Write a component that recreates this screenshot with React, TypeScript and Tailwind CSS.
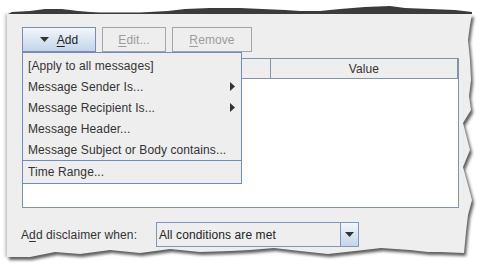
import React from "react";

const panelPath =
  "M7,14 L472,14 L470,25 L468,40 L470,60 L471,80 L469,96 L471,110 L463,123 L470,150 L463,167 L468,185 L472,200 L468,215 L466,232 L464,253 L440,252 L428,252 L410,250 L381,248 L355,251 L328,254 L300,251 L274,248 L250,250 L230,251 L200,252 L170,249 L140,253 L110,250 L80,254 L55,252 L30,257 L7,257 Z";

const topBand =
  "M8,14 L12,12 L30,11 L45,9 L62,9 L78,11 L90,12 L100,12.5 L140,12.5 L168,11 L185,9 L210,8 L240,8 L262,9 L285,10 L300,11 L320,11 L340,9 L365,7 L390,6 L405,8 L430,9 L455,10 L472,12 L472,14 Z";

function TornPaper() {
  return (
    <svg className="absolute inset-0" width="482" height="269" viewBox="0 0 482 269">
      <defs>
        <filter id="blur1" x="-10%" y="-10%" width="120%" height="120%">
          <feGaussianBlur stdDeviation="1.6" />
        </filter>
        <filter id="blur2" x="-10%" y="-10%" width="120%" height="120%">
          <feGaussianBlur stdDeviation="0.6" />
        </filter>
      </defs>
      <path d={panelPath} transform="translate(-2,0)" fill="#c8c8c8" filter="url(#blur1)" />
      <path d={panelPath} transform="translate(2,3)" fill="#5e5e5e" filter="url(#blur1)" />
      <path d={topBand} fill="#3a3a3a" filter="url(#blur2)" />
      <path d={panelPath} fill="#eeeeee" />
    </svg>
  );
}

function MenuItem({ label, sub }: { label: string; sub?: boolean }) {
  return (
    <div className="h-[21px] flex items-center justify-between pl-[5px] pr-[6px] text-[#333]">
      <span>{label}</span>
      {sub && (
        <svg width="5" height="9" viewBox="0 0 5 9">
          <path d="M0,0 L5,4.5 L0,9 Z" fill="#333" />
        </svg>
      )}
    </div>
  );
}

export default function App() {
  return (
    <div className="w-[482px] h-[269px] relative bg-white overflow-hidden font-['Liberation_Sans',Arial,sans-serif] text-[12px] leading-none tracking-[0.1px]">
      <TornPaper />
      <div className="relative flex flex-col pl-[22px] pt-[27px]">
        {/* button row */}
        <div className="relative flex gap-[6px] h-[25px]">
          <div className="w-[74px] h-[25px] border border-[#7b8dac] bg-gradient-to-b from-[#f3f6fb] to-[#c3d5ea] flex items-center justify-center gap-[8px] text-[#222]">
            <svg width="9" height="5" viewBox="0 0 9 5">
              <path d="M0,0 L9,0 L4.5,5 Z" fill="#333" />
            </svg>
            <span>
              <u className="underline-offset-2">A</u>dd
            </span>
          </div>
          <div className="w-[64px] h-[25px] border border-[#a5a5a5] flex items-center justify-center text-[#9c9c9c]">
            <span>
              <u className="underline-offset-2">E</u>dit...
            </span>
          </div>
          <div className="w-[80px] h-[25px] border border-[#a5a5a5] flex items-center justify-center text-[#9c9c9c]">
            <span>
              <u className="underline-offset-2">R</u>emove
            </span>
          </div>

          {/* popup menu */}
          <div className="absolute left-0 top-[25px] w-[220px] z-10 border border-[#6d8cc7] bg-[#eeeeee] pt-[2px] pb-[1px] flex flex-col">
            <MenuItem label="[Apply to all messages]" />
            <MenuItem label="Message Sender Is..." sub />
            <MenuItem label="Message Recipient Is..." sub />
            <MenuItem label="Message Header..." />
            <MenuItem label="Message Subject or Body contains..." />
            <div className="h-px bg-[#6d8cc7]" />
            <MenuItem label="Time Range..." />
          </div>
        </div>

        {/* table */}
        <div className="mt-[6px] w-[437px] h-[150px] border border-[#8294a9] bg-white flex flex-col">
          <div className="h-[20px] flex bg-[#eeeeee] border-b border-[#8294a9]">
            <div className="w-[248px] border-r border-[#8294a9]" />
            <div className="flex-1 flex items-center justify-center text-[#333] border-r border-[#8294a9]">Value</div>
          </div>
          <div className="flex-1" />
        </div>

        {/* bottom row */}
        <div className="mt-[14px] h-[25px] flex items-center">
          <div className="w-[135px] -ml-px text-[#333]">
            A<u className="underline-offset-2">d</u>d disclaimer when:
          </div>
          <div className="w-[203px] h-[25px] border border-[#7d97be] bg-[#eeeeee] flex">
            <div className="flex-1 flex items-center pl-[2px] text-[#222]">All conditions are met</div>
            <div className="w-[18px] border-l border-[#7d97be] bg-gradient-to-b from-[#f3f6fb] to-[#c3d5ea] flex items-center justify-center">
              <svg width="9" height="5" viewBox="0 0 9 5">
                <path d="M0,0 L9,0 L4.5,5 Z" fill="#333" />
              </svg>
            </div>
          </div>
        </div>
      </div>
    </div>
  );
}
